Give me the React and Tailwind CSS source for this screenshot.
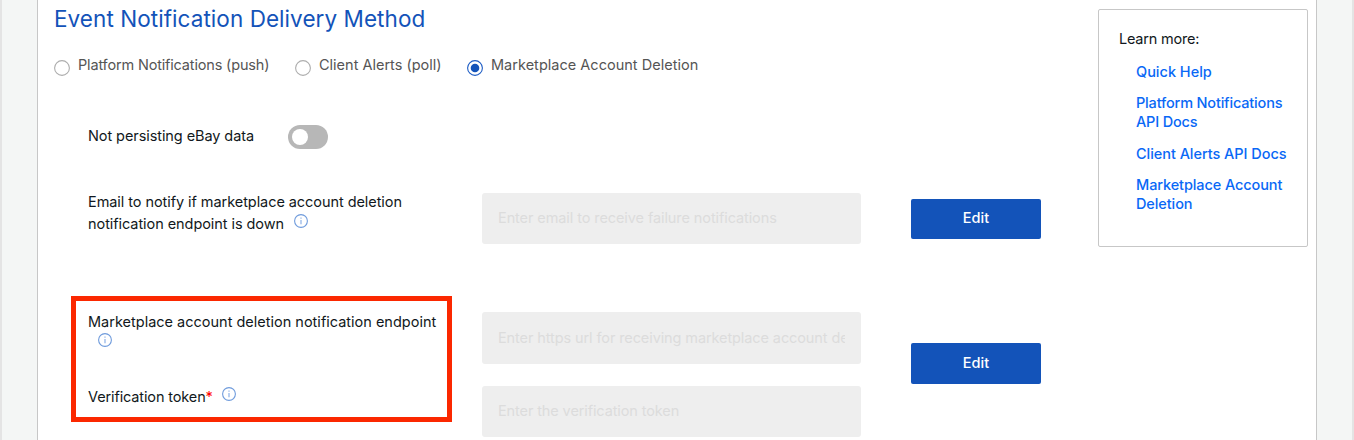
function InfoIcon({ className }) {
  return (
    <svg viewBox="0 0 14 14" className={`h-3.5 w-3.5 shrink-0 ${className}`} fill="none">
      <circle cx="7" cy="7" r="6.4" stroke="#6f9bdc" strokeWidth="1.1" />
      <path d="M7 5.9V10.2" stroke="#8db1e6" strokeWidth="1.2" />
      <path d="M7 3.6V4.8" stroke="#8db1e6" strokeWidth="1.2" />
    </svg>
  );
}

function Radio({ label, checked, className, textClass }) {
  return (
    <label className={`flex shrink-0 items-start gap-2 ${className}`}>
      <svg viewBox="0 0 16 16" className="mt-[5px] h-4 w-4 shrink-0" fill="none">
        <circle cx="8" cy="8" r="7.4" stroke={checked ? "#1d5cc4" : "#adadad"} strokeWidth="1.1" />
        {checked && <circle cx="8" cy="8" r="4.3" fill="#1353b9" />}
      </svg>
      <span className={`whitespace-nowrap leading-5 text-[#555] ${textClass}`}>{label}</span>
    </label>
  );
}

function Field({ placeholder, className, textClass }) {
  return (
    <div className={`flex w-[379px] items-center rounded-[3px] bg-[#eeeeee] px-4 ${className}`}>
      <span className={`min-w-0 flex-1 overflow-hidden whitespace-nowrap leading-5 text-[#dcdcdc] ${textClass}`}>
        {placeholder}
      </span>
    </div>
  );
}

function EditButton({ className }) {
  return (
    <button className={`flex w-[130px] items-center justify-center rounded-[2px] bg-[#1353b9] pb-0.5 leading-5 font-medium text-white ${className}`}>
      Edit
    </button>
  );
}

export default function App() {
  return (
    <div className="flex h-[440px] w-[1354px] overflow-hidden bg-[#e4e4e4] px-[2px] font-['Inter',sans-serif] text-[14.5px] text-[#111820]">
      <div className="flex flex-1 bg-[#f4f6f5] pl-[35px]">
        <main className="flex w-[1280px] shrink-0 border-x border-[#c7c7c7] bg-white">
          <section className="relative flex w-[1060px] shrink-0 flex-col">
            <h1 className="ml-4 h-[38px] whitespace-nowrap text-[22.5px] leading-[38px] tracking-[0.06px] text-[#1353b9]">
              Event Notification Delivery Method
            </h1>
            <div className="mt-[17px] ml-4 flex h-[21px]">
              <Radio label="Platform Notifications (push)" className="w-[241px]" textClass="tracking-[-0.17px]" />
              <Radio label="Client Alerts (poll)" className="w-[172px]" textClass="" />
              <Radio label="Marketplace Account Deletion" checked className="" textClass="tracking-[0.02px]" />
            </div>

            <div className="mt-[49px] ml-[50px] flex h-6">
              <span className="w-[200px] whitespace-nowrap leading-[22px] tracking-[-0.08px]">
                Not persisting eBay data
              </span>
              <span className="flex h-6 w-10 items-center rounded-full bg-[#b7b7b7] pl-1">
                <span className="h-4 w-4 rounded-full bg-white" />
              </span>
            </div>

            <div className="mt-[42px] ml-[50px] flex h-[53px]">
              <div className="w-[394px] shrink-0 whitespace-nowrap leading-[22px] tracking-[-0.065px]">
                <div>Email to notify if marketplace account deletion</div>
                <div className="flex">
                  <span className="w-[206px]">notification endpoint is down</span>
                  <InfoIcon className="mt-[1px]" />
                </div>
              </div>
              <Field placeholder="Enter email to receive failure notifications" className="mt-0.5 h-[51px] pb-[2px]" textClass="tracking-[-0.09px]" />
              <EditButton className="mt-2 ml-[50px] h-10" />
            </div>

            <div className="mt-[67px] ml-[50px] flex h-[126px]">
              <div className="w-[394px] shrink-0 whitespace-nowrap leading-[22px]">
                <div>Marketplace account deletion notification endpoint</div>
                <InfoIcon className="ml-[10px]" />
                <div className="mt-[39px] flex">
                  <span className="w-[134px] tracking-[-0.13px]">
                    Verification token<span className="text-[#f00]">*</span>
                  </span>
                  <InfoIcon className="mt-[1px]" />
                </div>
              </div>
              <div className="flex flex-col gap-[22px] pt-px">
                <Field placeholder="Enter https url for receiving marketplace account deletion notifications" className="h-[52px]" textClass="tracking-[-0.1px]" />
                <Field placeholder="Enter the verification token" className="h-[51px] pb-[2px]" textClass="tracking-[-0.11px]" />
              </div>
              <EditButton className="mt-8 ml-[50px] h-[41px]" />
            </div>

            <div className="absolute top-[296px] left-[33px] h-[126px] w-[381px] border-[5px] border-[#fb2800]" />
          </section>

          <aside className="mt-[9px] h-[238px] w-[210px] shrink-0 rounded-[2px] border border-[#c7c7c7] pt-[19px] pl-5 whitespace-nowrap">
            <p className="leading-5 tracking-[-0.22px]">Learn more:</p>
            <ul className="mt-[13px] ml-[17px] flex flex-col gap-3 font-medium leading-[19px] text-[#0968f6]">
              <li>Quick Help</li>
              <li className="mb-px tracking-[-0.18px]">Platform Notifications<br />API Docs</li>
              <li className="tracking-[-0.05px]">Client Alerts API Docs</li>
              <li className="tracking-[-0.1px]">Marketplace Account<br />Deletion</li>
            </ul>
          </aside>
        </main>
      </div>
    </div>
  );
}
